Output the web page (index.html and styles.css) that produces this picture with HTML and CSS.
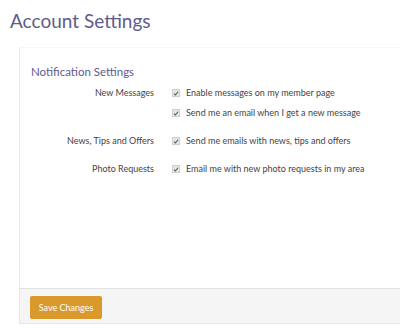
FILE: index.html
```html
<!DOCTYPE html>
<html>
<head>
<meta charset="utf-8">
<link rel="stylesheet" href="styles.css">
</head>
<body>
<h1 class="title">Account Settings</h1>
<div class="panel">
  <div class="panel-body">
    <h2 class="section">Notification Settings</h2>
    <div class="rows">
      <div class="label">New Messages</div>
      <div class="opts">
        <label class="opt"><span class="cb"><svg viewBox="0 0 8 8" width="7" height="7"><path d="M1.5 4.2 L3.2 6 L6.6 1.6" fill="none" stroke="#555" stroke-width="1.4"/></svg></span>Enable messages on my member page</label>
        <label class="opt"><span class="cb"><svg viewBox="0 0 8 8" width="7" height="7"><path d="M1.5 4.2 L3.2 6 L6.6 1.6" fill="none" stroke="#555" stroke-width="1.4"/></svg></span>Send me an email when I get a new message</label>
      </div>
      <div class="label">News, Tips and Offers</div>
      <div class="opts">
        <label class="opt"><span class="cb"><svg viewBox="0 0 8 8" width="7" height="7"><path d="M1.5 4.2 L3.2 6 L6.6 1.6" fill="none" stroke="#555" stroke-width="1.4"/></svg></span>Send me emails with news, tips and offers</label>
      </div>
      <div class="label">Photo Requests</div>
      <div class="opts">
        <label class="opt"><span class="cb"><svg viewBox="0 0 8 8" width="7" height="7"><path d="M1.5 4.2 L3.2 6 L6.6 1.6" fill="none" stroke="#555" stroke-width="1.4"/></svg></span>Email me with new photo requests in my area</label>
      </div>
    </div>
  </div>
  <div class="panel-footer">
    <button class="btn">Save Changes</button>
  </div>
</div>
</body>
</html>
```
FILE: styles.css
```css
html, body {
  margin: 0;
  padding: 0;
  background: #ffffff;
  font-family: Lato, "Open Sans", sans-serif;
}
body {
  padding: 9px 0 0 10px;
  overflow: hidden;
}
.title {
  margin: 0;
  font-size: 19px;
  font-weight: 400;
  color: #615b8c;
  line-height: 24px;
}
.panel {
  margin-top: 14px;
  margin-left: 9px;
  margin-right: -20px;
  border-left: 1px solid #e6e6e6;
  border-top: 1px solid #f6f6f6;
  border-bottom: 1px solid #e6e6e6;
}
.panel-body {
  padding: 17px 10px 0 11px;
  height: 240px;
  box-sizing: border-box;
}
.section {
  margin: 0 0 8px 0;
  font-size: 11.5px;
  font-weight: 400;
  color: #615b8c;
  line-height: 14px;
}
.rows {
  display: grid;
  grid-template-columns: 123px 1fr;
  column-gap: 18px;
  row-gap: 16px;
  font-size: 9px;
  color: #444;
}
.label {
  text-align: right;
  line-height: 12px;
}
.opts {
  display: flex;
  flex-direction: column;
  gap: 8px;
}
.opt {
  display: flex;
  align-items: center;
  line-height: 12px;
  white-space: nowrap;
}
.cb {
  width: 6px;
  height: 6px;
  background: #e4e4e4;
  border: 1px solid #cfcfcf;
  margin-right: 6px;
  display: flex;
  align-items: center;
  justify-content: center;
  overflow: hidden;
}
.cb svg {
  display: block;
}
.panel-footer {
  background: #f5f5f5;
  border-top: 1px solid #e0e0e0;
  padding: 6px 10px 4px 10px;
}
.btn {
  background: #d9992c;
  color: #ffffff;
  border: none;
  border-radius: 2px;
  font-family: Lato, "Open Sans", sans-serif;
  font-size: 9px;
  width: 72px;
  height: 23px;
  padding: 0;
  cursor: pointer;
}
```
